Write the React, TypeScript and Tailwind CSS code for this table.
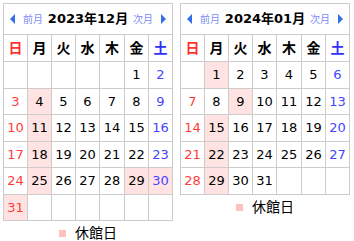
const FONT = '[font-family:"DejaVu_Sans","Noto_Sans_CJK_JP",sans-serif]'

const WEEK = ['日', '月', '火', '水', '木', '金', '土']

// column widths incl. right border
const COLS = 'grid-cols-[24px_24px_24px_24px_25px_24px_24px]'

type Month = {
  title: string
  offset: number
  days: number
  holidays: number[]
}

const MONTHS: Month[] = [
  { title: '2023年12月', offset: 5, days: 31, holidays: [4, 11, 18, 25, 29, 30, 31] },
  { title: '2024年01月', offset: 1, days: 31, holidays: [1, 9, 15, 22, 29] },
]

function Arrow({ dir }: { dir: 'l' | 'r' }) {
  return (
    <svg width="5" height="10" viewBox="0 0 5 10" className="shrink-0">
      {dir === 'l' ? <polygon points="5,0 5,10 0,5" fill="#2f6fe8" /> : <polygon points="0,0 0,10 5,5" fill="#2f6fe8" />}
    </svg>
  )
}

function Calendar({ m }: { m: Month }) {
  const cells: (number | null)[] = []
  for (let i = 0; i < m.offset; i++) cells.push(null)
  for (let d = 1; d <= m.days; d++) cells.push(d)
  while (cells.length % 7) cells.push(null)
  const rows: (number | null)[][] = []
  for (let i = 0; i < cells.length; i += 7) rows.push(cells.slice(i, i + 7))

  return (
    <div className="w-[170px]">
      <div className="border-l border-t border-[#cccccc]">
        {/* header */}
        <div className="h-[31px] border-r border-b border-[#cccccc] flex items-center px-[6px]">
          <Arrow dir="l" />
          <span className="ml-[8px] text-[10px] text-[#7d8cf5]">前月</span>
          <span className="flex-1 text-center text-[13px] font-bold text-black">{m.title}</span>
          <span className="mr-[8px] text-[10px] text-[#7d8cf5]">次月</span>
          <Arrow dir="r" />
        </div>
        {/* week names */}
        <div className={`grid ${COLS}`}>
          {WEEK.map((w, i) => (
            <div
              key={w}
              className={`h-[27px] border-r border-b border-[#cccccc] flex items-center justify-center text-[14px] font-bold ${
                i === 0 ? 'text-[#ff3030]' : i === 6 ? 'text-[#3030ff]' : 'text-black'
              }`}
            >
              {w}
            </div>
          ))}
        </div>
        {rows.map((row, r) => (
          <div key={r} className={`grid ${COLS}`}>
            {row.map((d, i) => {
              const hol = d !== null && m.holidays.includes(d)
              return (
                <div
                  key={i}
                  className={`${r % 2 === 0 ? 'h-[27px]' : 'h-[26px]'} border-r border-b border-[#cccccc] flex items-center justify-center text-[13px] ${
                    hol ? 'bg-[#ffe3e3]' : 'bg-white'
                  } ${i === 0 ? 'text-[#ff3b3b]' : i === 6 ? 'text-[#4545ff]' : 'text-black'}`}
                >
                  {d}
                </div>
              )
            })}
          </div>
        ))}
      </div>
      {/* legend */}
      <div className="mt-[2px] h-[20px] flex items-center justify-center gap-[9px]">
        <span className="w-[7px] h-[7px] bg-[#ffc0c0]" />
        <span className="text-[14px] text-black">休館日</span>
      </div>
    </div>
  )
}

export default function App() {
  return (
    <div className={`w-[354px] h-[241px] bg-white p-[3px] flex items-start gap-[7px] ${FONT}`}>
      {MONTHS.map((m) => (
        <Calendar key={m.title} m={m} />
      ))}
    </div>
  )
}
